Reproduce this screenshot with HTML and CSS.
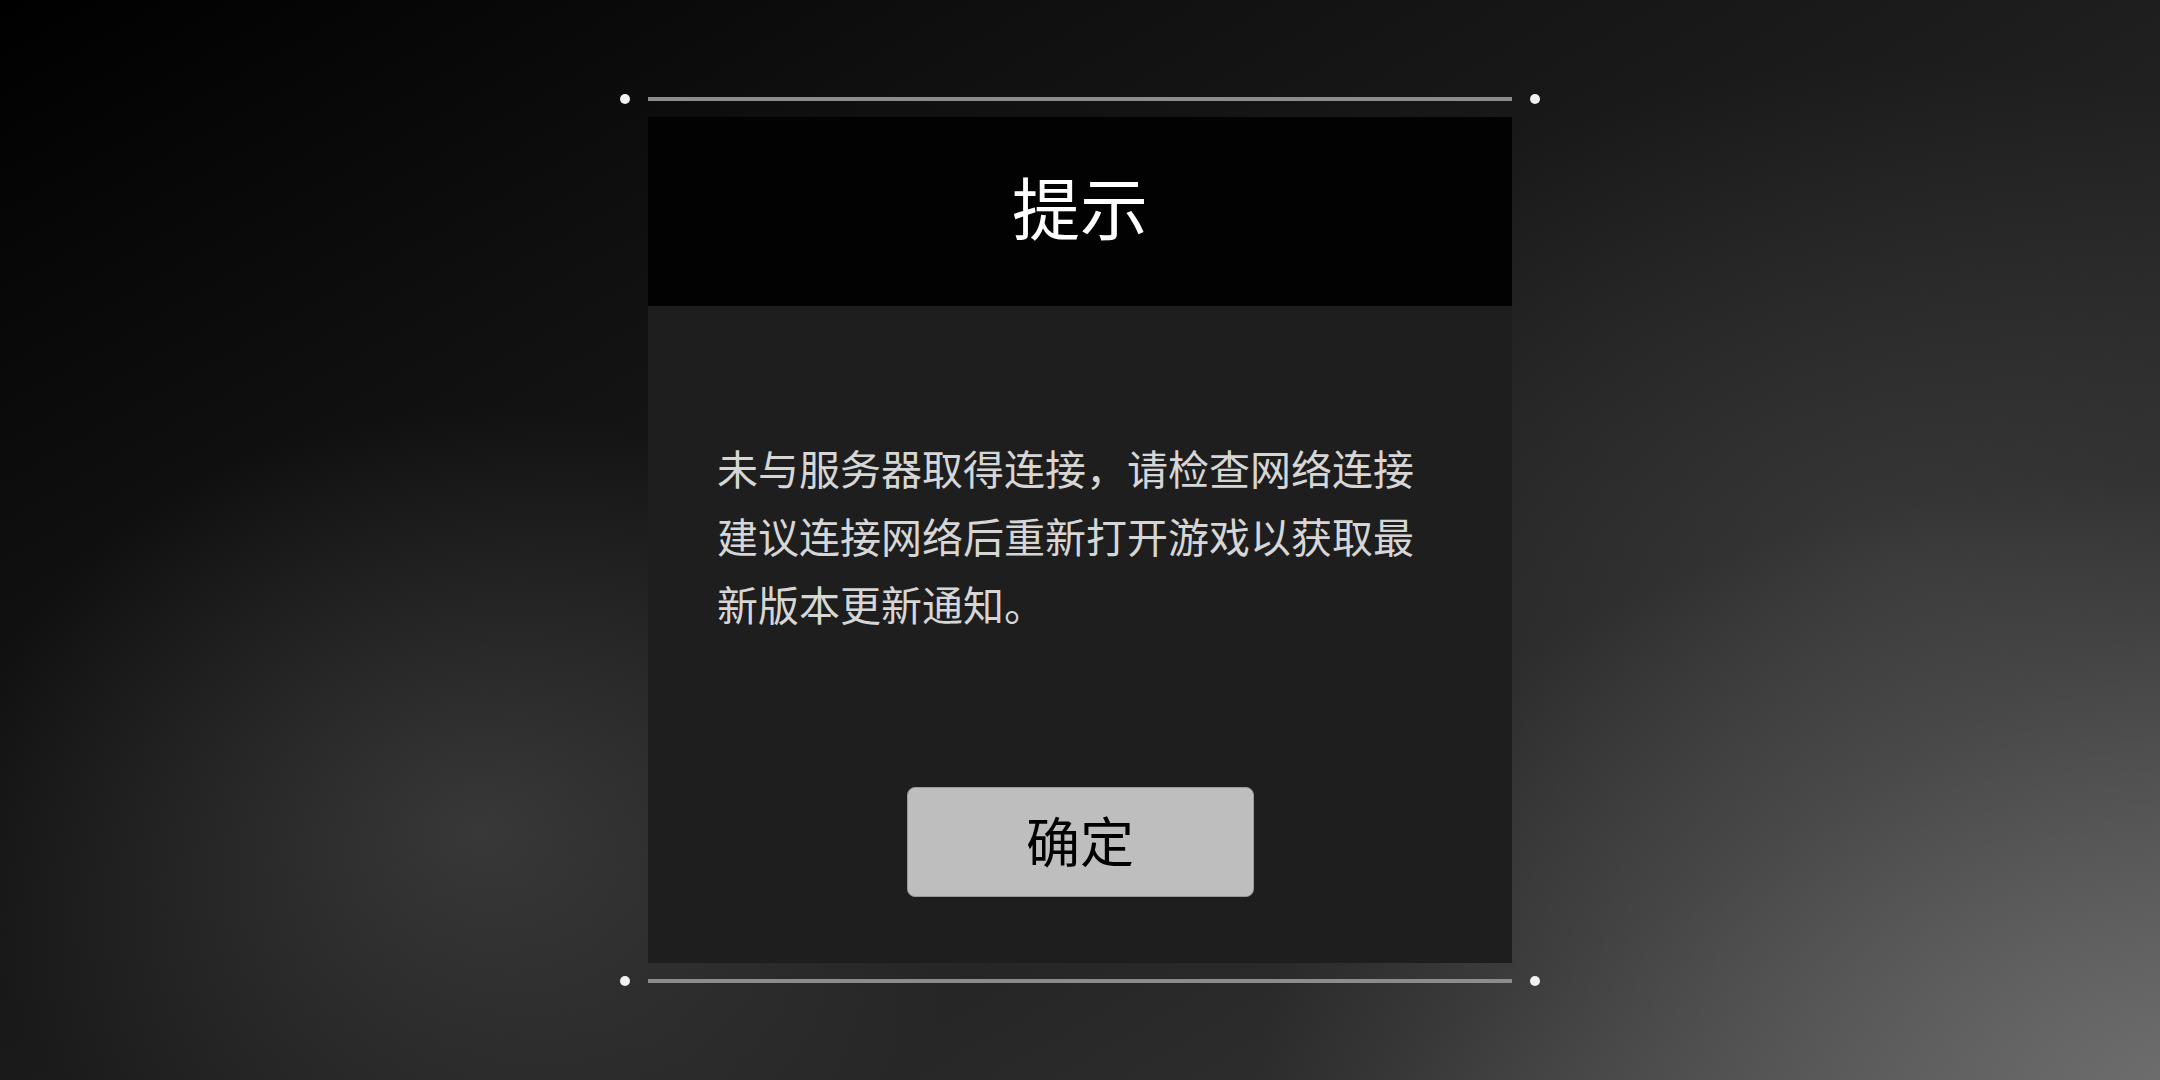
FILE: index.html
```html
<!DOCTYPE html>
<html lang="zh-CN">
  <head>
    <meta charset="UTF-8" />
    <meta name="viewport" content="width=device-width, initial-scale=1.0" />
    <title>提示</title>
    <link rel="stylesheet" href="styles.css">
  </head>
  <body>
    <div class="frame">
      <div class="rail">
        <span class="dot"></span>
        <span class="line"></span>
        <span class="dot"></span>
      </div>
      <section class="dialog">
        <header class="dialog-title">
          <h1>提示</h1>
        </header>
        <div class="dialog-body">
          <p class="message">未与服务器取得连接，请检查网络连接建议连接网络后重新打开游戏以获取最新版本更新通知。</p>
          <button class="confirm">确定</button>
        </div>
      </section>
      <div class="rail">
        <span class="dot"></span>
        <span class="line"></span>
        <span class="dot"></span>
      </div>
    </div>
  </body>
</html>
```

FILE: styles.css
```css
html,
body {
  height: 100%;
}
body {
  margin: 0;
  font-family: "Noto Sans CJK SC", "Noto Sans", sans-serif;
  background-color: #1a1a1a;
  background-image:
    radial-gradient(ellipse 900px 600px at 2160px 1080px, rgba(120, 120, 120, 0.75), rgba(120, 120, 120, 0) 100%),
    radial-gradient(ellipse 520px 420px at 480px 830px, rgba(80, 80, 80, 0.55), rgba(80, 80, 80, 0) 100%),
    radial-gradient(ellipse 700px 500px at 1900px 560px, rgba(70, 70, 70, 0.5), rgba(70, 70, 70, 0) 100%),
    linear-gradient(150deg, #000 0%, #0f0f0f 25%, #1c1c1c 50%, #2e2e2e 80%, #4a4a4a 100%);
  display: flex;
  align-items: center;
  justify-content: center;
}
.frame {
  display: flex;
  flex-direction: column;
  align-items: center;
  gap: 13px;
}
.rail {
  display: flex;
  align-items: center;
  gap: 18px;
  height: 10px;
}
.dot {
  width: 10px;
  height: 10px;
  border-radius: 50%;
  background-color: #f2f2f2;
}
.line {
  width: 864px;
  height: 4px;
  background-color: #8c8c8c;
}
.dialog {
  width: 864px;
}
.dialog-title {
  height: 189px;
  background-color: #020202;
  display: flex;
  align-items: center;
  justify-content: center;
}
.dialog-title h1 {
  margin: 0 0 12px;
  font-size: 68px;
  font-weight: normal;
  line-height: 1;
  color: #fff;
}
.dialog-body {
  height: 657px;
  box-sizing: border-box;
  padding: 127px 69px 66px;
  background-color: #1e1e1e;
  display: flex;
  flex-direction: column;
  align-items: center;
}
.message {
  margin: 0;
  align-self: stretch;
  font-size: 41px;
  line-height: 68px;
  color: #d6d6d6;
}
.confirm {
  margin-top: auto;
  width: 347px;
  height: 110px;
  border: 1px solid #9a9a9a;
  border-radius: 8px;
  background-color: #bebebe;
  font-family: inherit;
  font-size: 54px;
  line-height: 1;
  color: #000;
  padding: 0 0 5px;
}
```
